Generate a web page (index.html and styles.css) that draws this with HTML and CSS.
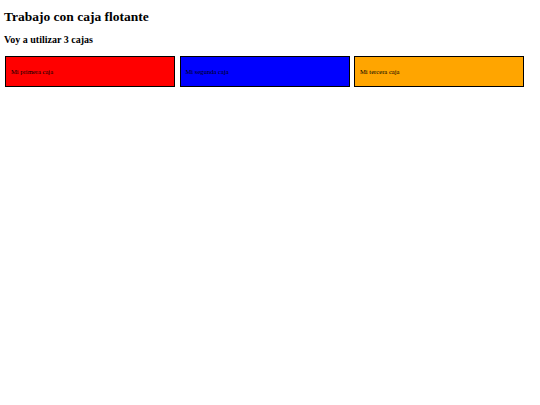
FILE: index.html
```html
<!DOCTYPE html>
<html lang="es">
<head>
<meta charset="utf-8">
<title>Trabajo con caja flotante</title>
<link rel="stylesheet" href="styles.css">
</head>
<body>
<h1 class="title">Trabajo con caja flotante</h1>
<h2 class="subtitle">Voy a utilizar 3 cajas</h2>
<div class="boxes">
  <div class="box box-red">Mi primera caja</div>
  <div class="box box-blue">Mi segunda caja</div>
  <div class="box box-orange">Mi tercera caja</div>
</div>
</body>
</html>
```
FILE: styles.css
```css
html, body {
  margin: 0;
  padding: 0;
  background: #fff;
}
body {
  font-family: "Liberation Serif", "Times New Roman", serif;
  color: #000;
  padding: 0 4px;
}
.title {
  font-size: 13.5px;
  font-weight: bold;
  margin: 0;
  padding-top: 9px;
  line-height: 16px;
}
.subtitle {
  font-size: 10px;
  font-weight: bold;
  margin: 0;
  padding-top: 9px;
  line-height: 12px;
}
.boxes {
  display: flex;
  gap: 4.5px;
  margin: 10px 12px 0 1px;
}
.box {
  flex: 1;
  height: 29px;
  border: 1px solid #000;
  display: flex;
  align-items: center;
  padding: 0 5px;
  font-size: 6.6px;
}
.box-red { background: #ff0000; }
.box-blue { background: #0000ff; }
.box-orange { background: #ffa500; }
```
